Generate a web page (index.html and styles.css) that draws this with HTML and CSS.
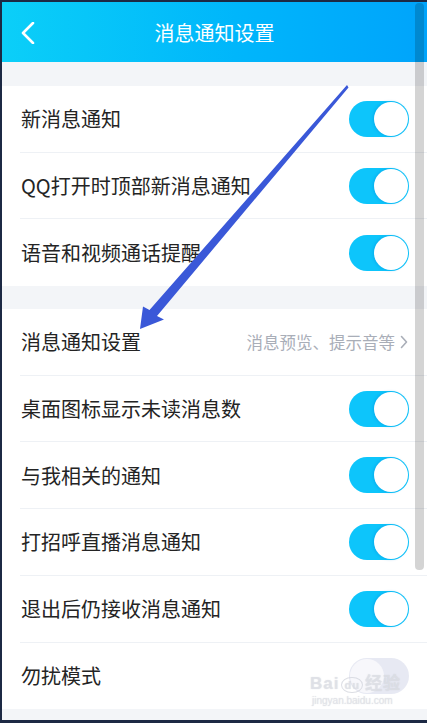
FILE: index.html
```html
<!DOCTYPE html>
<html lang="zh-CN">
<head>
    <meta charset="UTF-8">
    <meta name="viewport" content="width=device-width, initial-scale=1.0">
    <title>消息通知设置</title>
    <link rel="stylesheet" href="styles.css">
</head>
<body>

<div class="screen">
    <div class="header">
        <svg class="back" width="14" height="22" viewBox="0 0 14 22">
            <path d="M12 1 L2 11 L12 21" fill="none" stroke="#fff" stroke-width="2.6" stroke-linecap="round" stroke-linejoin="round"/>
        </svg>
        <h1>消息通知设置</h1>
    </div>

    <div class="group">
        <div class="row">
            <span class="label">新消息通知</span>
            <span class="switch on"><span class="knob"></span></span>
        </div>
        <div class="row">
            <span class="label">QQ打开时顶部新消息通知</span>
            <span class="switch on"><span class="knob"></span></span>
        </div>
        <div class="row">
            <span class="label">语音和视频通话提醒</span>
            <span class="switch on"><span class="knob"></span></span>
        </div>
    </div>

    <div class="group">
        <div class="row">
            <span class="label">消息通知设置</span>
            <span class="hint">消息预览、提示音等
                <svg width="8" height="14" viewBox="0 0 8 14">
                    <path d="M1.5 1.5 L6.5 7 L1.5 12.5" fill="none" stroke="#a9aeb8" stroke-width="1.6" stroke-linecap="round" stroke-linejoin="round"/>
                </svg>
            </span>
        </div>
        <div class="row">
            <span class="label">桌面图标显示未读消息数</span>
            <span class="switch on"><span class="knob"></span></span>
        </div>
        <div class="row">
            <span class="label">与我相关的通知</span>
            <span class="switch on"><span class="knob"></span></span>
        </div>
        <div class="row">
            <span class="label">打招呼直播消息通知</span>
            <span class="switch on"><span class="knob"></span></span>
        </div>
        <div class="row">
            <span class="label">退出后仍接收消息通知</span>
            <span class="switch on"><span class="knob"></span></span>
        </div>
        <div class="row">
            <span class="label">勿扰模式</span>
            <span class="switch off"><span class="knob"></span></span>
        </div>
    </div>

    <div class="scrollbar"></div>

    <div class="watermark">
        <div class="wm-logo">Bai<span class="wm-du">du</span>经验</div>
        <div class="wm-url">jingyan.baidu.com</div>
    </div>
</div>

<!-- annotation arrow drawn over the screenshot -->
<svg class="arrow" width="427" height="723" viewBox="0 0 427 723">
    <polygon points="347,85 348.5,87.5 157,316 164,319.5 140,329 143,306.5 149.5,310" fill="#3a58d8"/>
</svg>

</body>
</html>
```

FILE: styles.css
```css
html, body {
    margin: 0;
    padding: 0;
}
body {
    background-color: #1c2944;
    font-family: "Noto Sans CJK SC", "Noto Sans", sans-serif;
    width: 427px;
    height: 723px;
    overflow: hidden;
    position: relative;
}
.screen {
    position: relative;
    margin: 2px 0 0 2px;
    height: 718px;
    background-color: #f3f5f8;
    overflow: hidden;
}
.header {
    height: 60px;
    background: linear-gradient(90deg, #0bcff8 0%, #00b6fb 55%, #00a4fb 100%);
    display: flex;
    align-items: center;
    justify-content: center;
    position: relative;
}
.header h1 {
    margin: 0;
    color: #fff;
    font-size: 20px;
    font-weight: normal;
}
.back {
    position: absolute;
    left: 19px;
    top: 20px;
}
.group {
    margin-top: 24px;
    background-color: #fff;
}
.group + .group {
    margin-top: 23px;
}
.row {
    height: 66.7px;
    box-sizing: border-box;
    margin-left: 18px;
    padding-right: 18px;
    border-bottom: 1px solid #eef1f5;
    display: flex;
    align-items: center;
    justify-content: space-between;
}
.row:last-child {
    border-bottom: none;
}
.label {
    font-size: 20px;
    color: #242424;
    padding-left: 1px;
}
.hint {
    font-size: 16.5px;
    color: #a9aeb8;
    display: flex;
    align-items: center;
    gap: 5px;
    padding-right: 1px;
}
.switch {
    width: 60px;
    height: 36px;
    border-radius: 18px;
    box-sizing: border-box;
    padding: 1px;
    display: flex;
}
.switch.on {
    background-color: #0dc5fb;
    justify-content: flex-end;
}
.switch.off {
    background-color: #e7e9f3;
    justify-content: flex-start;
}
.knob {
    width: 34px;
    height: 34px;
    border-radius: 50%;
    background-color: #fff;
}
.switch.on .knob {
    box-shadow: -1px 0 3px rgba(0, 140, 220, 0.45);
}
.switch.off .knob {
    background-color: #f7f7fb;
}
.scrollbar {
    position: absolute;
    right: 3px;
    top: 1px;
    width: 9px;
    height: 567px;
    border-radius: 4px;
    background-color: rgba(0, 0, 0, 0.17);
}
.watermark {
    position: absolute;
    left: 308px;
    top: 672px;
    color: rgba(225, 227, 233, 0.7);
    text-shadow: 0 0 1px rgba(170, 175, 185, 0.45);
    font-family: "Liberation Sans", "Noto Sans CJK SC", sans-serif;
}
.wm-logo {
    font-size: 17px;
    font-weight: bold;
    line-height: 20px;
    letter-spacing: 1px;
}
.wm-du {
    font-size: 11px;
    border: 1.5px solid rgba(205, 208, 216, 0.7);
    border-radius: 50%;
    padding: 1px 2px;
    margin: 0 2px;
}
.wm-url {
    font-size: 10px;
    line-height: 12px;
    margin-left: 2px;
}
.arrow {
    position: absolute;
    left: 0;
    top: 0;
    pointer-events: none;
}
```
